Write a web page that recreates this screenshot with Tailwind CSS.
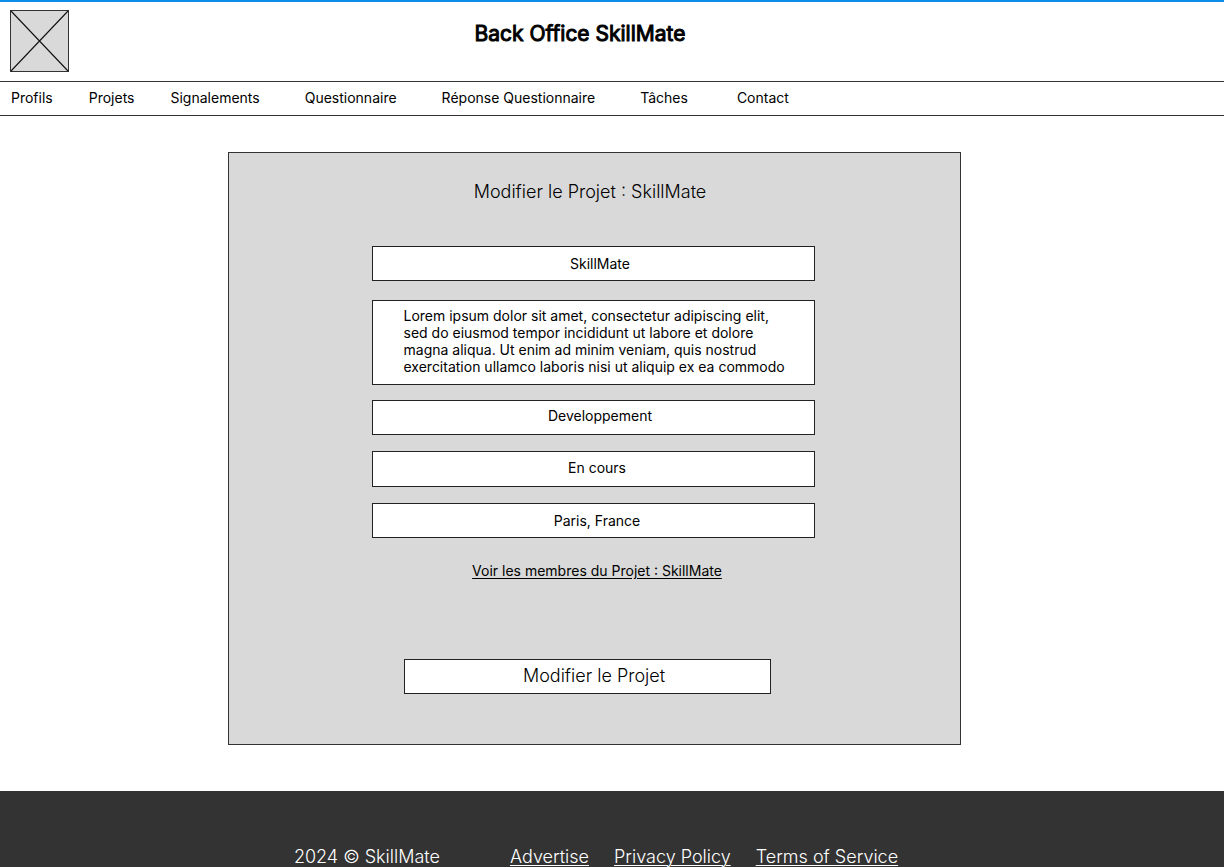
<!DOCTYPE html>
<html lang="fr">
<head>
<meta charset="utf-8">
<meta name="viewport" content="width=device-width, initial-scale=1">
<title>Back Office SkillMate</title>
<script src="https://cdn.jsdelivr.net/npm/@tailwindcss/browser@4"></script>
</head>
<body class="flex min-h-screen flex-col border-t-2 border-[#0d8ce9] bg-white font-['Inter',sans-serif] text-sm text-black">
  <header class="grid grid-cols-[60px_1fr] px-2.5 pt-2 pb-[9px]">
    <svg class="h-[62px] w-[59px]" viewBox="0 0 59 62" role="img" aria-label="Logo">
      <rect x="0.5" y="0.5" width="58" height="61" fill="#d9d9d9" stroke="#333"/>
      <path d="M1 1L58 61M58 1L1 61" stroke="#111" stroke-width="1.1" fill="none"/>
    </svg>
    <h1 class="pt-2.5 pr-[124px] text-center text-[21px] leading-[28px] [-webkit-text-stroke:1px_black]">Back Office SkillMate</h1>
  </header>
  <nav class="flex h-[35px] items-center border-y border-[#333] px-[11px] pb-0.5 leading-[17px]">
    <a href="#" class="mr-9">Profils</a>
    <a href="#" class="mr-9">Projets</a>
    <a href="#" class="mr-[45px]">Signalements</a>
    <a href="#" class="mr-[45px]">Questionnaire</a>
    <a href="#" class="mr-[45px]">Réponse Questionnaire</a>
    <a href="#" class="mr-[49px]">Tâches</a>
    <a href="#">Contact</a>
  </nav>
  <main class="flex grow justify-center pt-9 pr-9 pb-[46px]">
    <form class="flex w-[733px] flex-col items-center border border-[#333] bg-[#d9d9d9] pt-7 pb-[50px]">
      <h2 class="mb-[43px] pr-2 text-lg leading-[22px] font-light">Modifier le Projet : SkillMate</h2>
      <div class="flex flex-col items-center pr-0.5">
        <input aria-label="Nom du projet" value="SkillMate" class="mb-[19px] h-[35px] w-[443px] border border-[#222] bg-white pl-3.5 text-center">
        <textarea aria-label="Description" class="mb-[15px] h-[85px] w-[443px] resize-none overflow-hidden border border-[#222] bg-white pt-1.5 pr-5 pl-[31px] leading-[17px]">Lorem ipsum dolor sit amet, consectetur adipiscing elit, sed do eiusmod tempor incididunt ut labore et dolore magna aliqua. Ut enim ad minim veniam, quis nostrud exercitation ullamco laboris nisi ut aliquip ex ea commodo</textarea>
        <input aria-label="Catégorie" value="Developpement" class="mb-4 h-[35px] w-[443px] border border-[#222] bg-white pb-1 pl-3.5 text-center">
        <input aria-label="Statut" value="En cours" class="mb-4 h-[36px] w-[443px] border border-[#222] bg-white pb-1 pl-2 text-center">
        <input aria-label="Lieu" value="Paris, France" class="mb-6 h-[35px] w-[443px] border border-[#222] bg-white pl-2 text-center">
      </div>
      <a href="#" class="ml-1.5 leading-[17px] underline underline-offset-2">Voir les membres du Projet : SkillMate</a>
      <button type="submit" class="mt-20 mr-3.5 h-[35px] w-[367px] border border-[#222] bg-white pb-0.5 pl-3.5 text-lg leading-[22px] font-light">Modifier le Projet</button>
    </form>
  </main>
  <footer class="flex justify-center bg-[#333] pt-14 pr-8 text-lg leading-5 font-light text-white">
    <p class="mr-[70px]">2024 © SkillMate</p>
    <div class="flex gap-[25px]">
      <a href="#" class="underline decoration-1 underline-offset-2">Advertise</a>
      <a href="#" class="underline decoration-1 underline-offset-2">Privacy Policy</a>
      <a href="#" class="underline decoration-1 underline-offset-2">Terms of Service</a>
    </div>
  </footer>
</body>
</html>
